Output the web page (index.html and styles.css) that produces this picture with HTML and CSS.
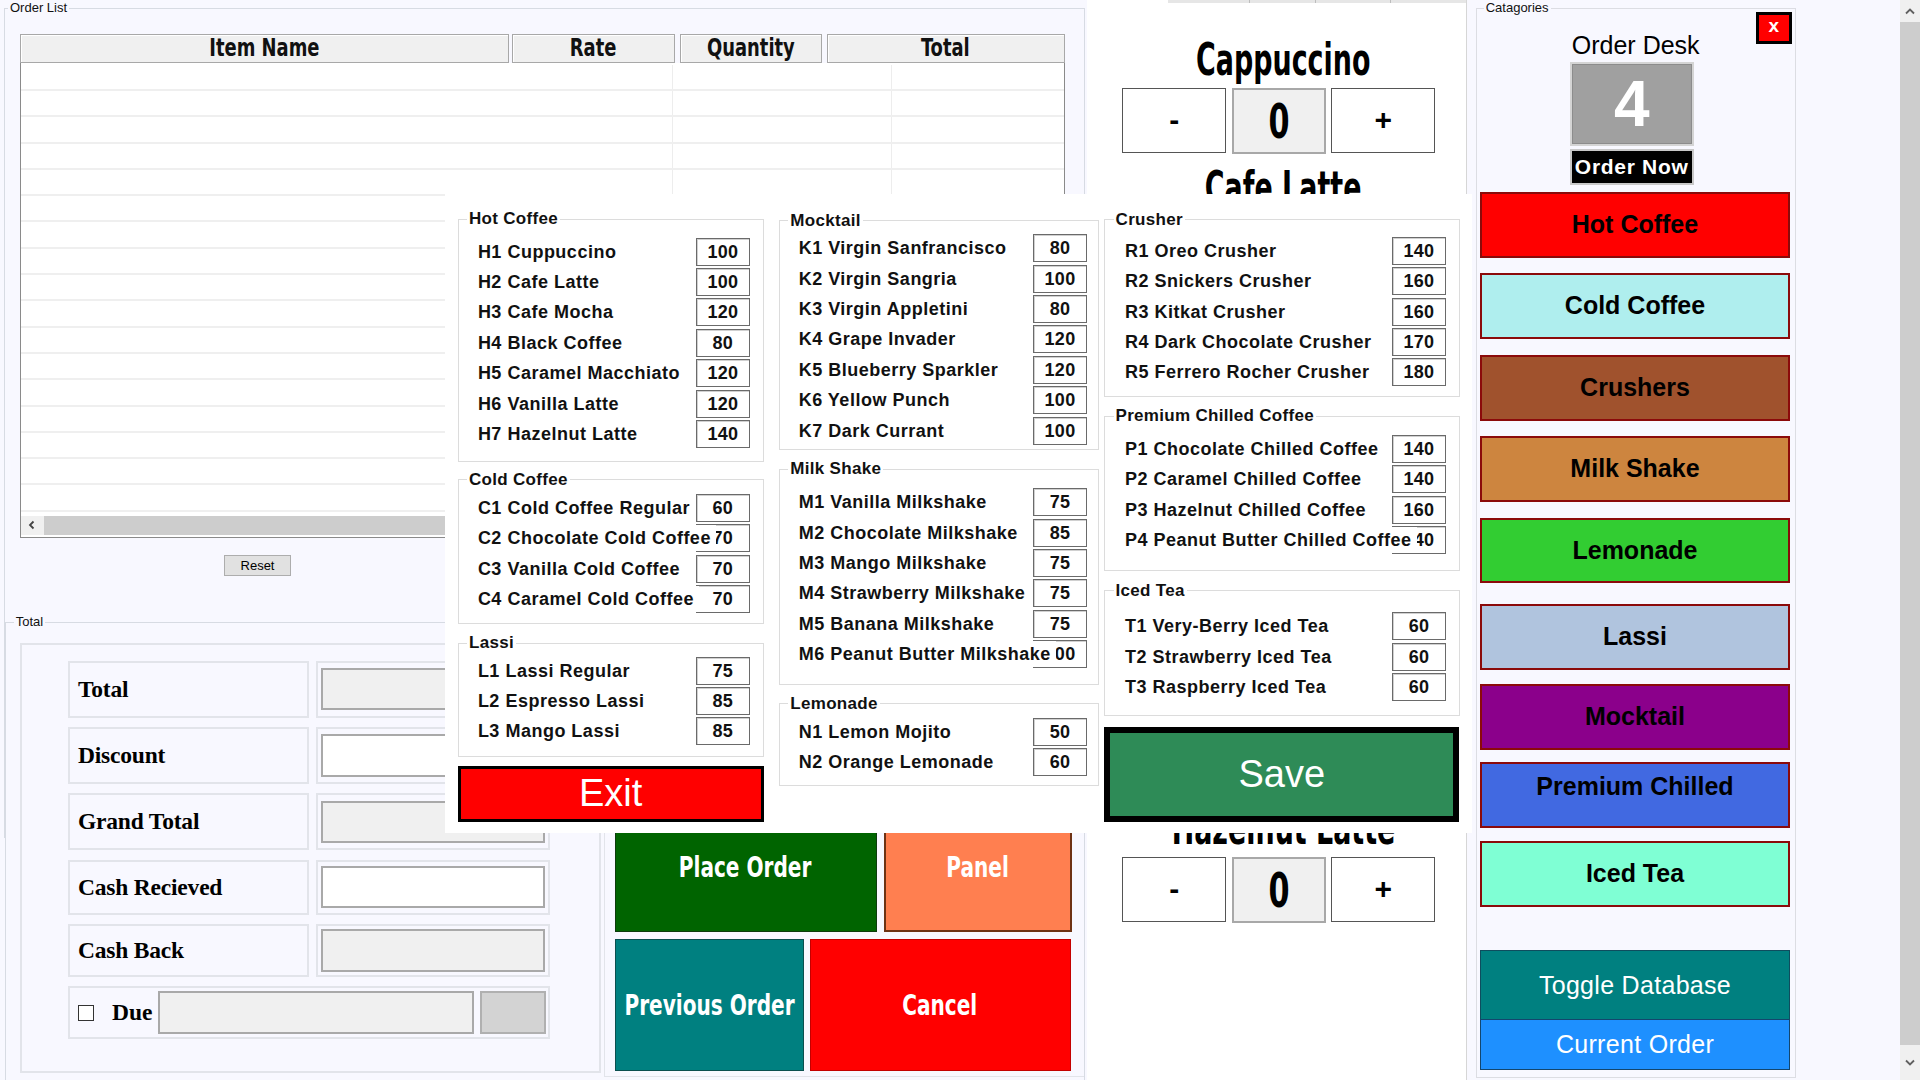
FILE: index.html
```html
<!DOCTYPE html>
<html>
<head>
<meta charset="utf-8">
<title>Order Desk</title>
<link rel="stylesheet" href="styles.css">
</head>
<body>
<div class="app">
  <div class="left">
    <fieldset class="gb orderlist">
      <legend>Order List</legend>
      <div class="grid">
        <div class="ghead">
          <div class="hc c-name"><span class="sx">Item Name</span></div>
          <div class="hc c-rate"><span class="sx">Rate</span></div>
          <div class="hc c-qty"><span class="sx">Quantity</span></div>
          <div class="hc c-total"><span class="sx">Total</span></div>
        </div>
        <div class="gbody">
          <div class="gr"><span></span><span></span><span></span></div>
          <div class="gr"><span></span><span></span><span></span></div>
          <div class="gr"><span></span><span></span><span></span></div>
          <div class="gr"><span></span><span></span><span></span></div>
          <div class="gr"><span></span><span></span><span></span></div>
          <div class="gr"><span></span><span></span><span></span></div>
          <div class="gr"><span></span><span></span><span></span></div>
          <div class="gr"><span></span><span></span><span></span></div>
          <div class="gr"><span></span><span></span><span></span></div>
          <div class="gr"><span></span><span></span><span></span></div>
          <div class="gr"><span></span><span></span><span></span></div>
          <div class="gr"><span></span><span></span><span></span></div>
          <div class="gr"><span></span><span></span><span></span></div>
          <div class="gr"><span></span><span></span><span></span></div>
          <div class="gr"><span></span><span></span><span></span></div>
          <div class="gr"><span></span><span></span><span></span></div>
          <div class="gr"><span></span><span></span><span></span></div>
        </div>
        <div class="hscroll">
          <span class="harrow"><svg width="10" height="10" viewBox="0 0 10 10"><polyline points="6.5,1.5 3,5 6.5,8.5" fill="none" stroke="#444" stroke-width="1.8"/></svg></span>
          <span class="hthumb"></span>
        </div>
      </div>
      <div class="reset">Reset</div>
    </fieldset>

    <fieldset class="gb totalbox">
      <legend>Total</legend>
      <div class="tinner">
        <div class="tpanel">
          <div class="tl">Total</div><div class="tv"><div class="tb ro"></div></div>
          <div class="tl">Discount</div><div class="tv"><div class="tb"></div></div>
          <div class="tl">Grand Total</div><div class="tv"><div class="tb ro"></div></div>
          <div class="tl">Cash Recieved</div><div class="tv"><div class="tb"></div></div>
          <div class="tl">Cash Back</div><div class="tv"><div class="tb ro"></div></div>
          <div class="duecell"><span class="chk"></span><span class="duel">Due</span><div class="tb ro duebox"></div><div class="duebtn"></div></div>
        </div>
        <div class="actions">
          <div class="arow arow1">
            <div class="abtn place"><span class="sx">Place Order</span></div>
            <div class="abtn panel"><span class="sx">Panel</span></div>
          </div>
          <div class="arow arow2">
            <div class="abtn prev"><span class="sx">Previous Order</span></div>
            <div class="abtn cancel"><span class="sx">Cancel</span></div>
          </div>
        </div>
      </div>
    </fieldset>
  </div>

  <div class="mid">
    <div class="strip"><span class="s1"></span><span class="s2"></span><span class="s3"></span><span class="s4"></span></div>
    <div class="qitem first">
      <div class="qtitle"><span class="sx">Cappuccino</span></div>
      <div class="qctl"><div class="qb minus">-</div><div class="qz"><span class="sx">0</span></div><div class="qb plus">+</div></div>
    </div>
    <div class="qclip qclip-top"><div class="qtitle"><span class="sx">Cafe Latte</span></div></div>
    <div class="qclip qclip-bottom"><div class="qtitle"><span class="sx">Hazelnut Latte</span></div></div>
    <div class="qctl qctl-last"><div class="qb minus">-</div><div class="qz"><span class="sx">0</span></div><div class="qb plus">+</div></div>
  </div>

  <fieldset class="gb cats">
    <legend>Catagories</legend>
    <div class="cathead">
      <div class="chl"></div>
      <div class="desk">Order Desk</div>
      <div class="chr"><div class="xbtn">x</div></div>
    </div>
    <div class="deskcol">
      <div class="num">4</div>
      <div class="ordernow">Order Now</div>
    </div>
    <div class="catbtn cb-hot">Hot Coffee</div>
    <div class="catbtn cb-cold">Cold Coffee</div>
    <div class="catbtn cb-crush">Crushers</div>
    <div class="catbtn cb-milk">Milk Shake</div>
    <div class="catbtn cb-lemon">Lemonade</div>
    <div class="catbtn cb-lassi">Lassi</div>
    <div class="catbtn cb-mock">Mocktail</div>
    <div class="catbtn cb-prem">Premium Chilled</div>
    <div class="catbtn cb-iced">Iced Tea</div>
    <div class="dbbtn toggle">Toggle Database</div>
    <div class="dbbtn current">Current Order</div>
  </fieldset>

  <div class="vscroll">
    <div class="varrow"><svg width="12" height="8" viewBox="0 0 12 8"><polyline points="2,6.5 6,2.5 10,6.5" fill="none" stroke="#606060" stroke-width="1.8"/></svg></div>
    <div class="vthumb"></div>
    <div class="varrow down"><svg width="12" height="8" viewBox="0 0 12 8"><polyline points="2,1.5 6,5.5 10,1.5" fill="none" stroke="#606060" stroke-width="1.8"/></svg></div>
  </div>
</div>

<div class="overlay">
  <div class="ocol ocol1">
    <fieldset class="mg g-hot">
      <legend>Hot Coffee</legend>
      <div class="rows">
        <div class="row"><div class="iname"><span>H1 Cuppuccino</span></div><div class="price">100</div></div>
        <div class="row"><div class="iname"><span>H2 Cafe Latte</span></div><div class="price">100</div></div>
        <div class="row"><div class="iname"><span>H3 Cafe Mocha</span></div><div class="price">120</div></div>
        <div class="row"><div class="iname"><span>H4 Black Coffee</span></div><div class="price">80</div></div>
        <div class="row"><div class="iname"><span>H5 Caramel Macchiato</span></div><div class="price">120</div></div>
        <div class="row"><div class="iname"><span>H6 Vanilla Latte</span></div><div class="price">120</div></div>
        <div class="row"><div class="iname"><span>H7 Hazelnut Latte</span></div><div class="price">140</div></div>
      </div>
    </fieldset>
    <fieldset class="mg g-cold">
      <legend>Cold Coffee</legend>
      <div class="rows">
        <div class="row"><div class="iname"><span>C1 Cold Coffee Regular</span></div><div class="price">60</div></div>
        <div class="row"><div class="iname"><span>C2 Chocolate Cold Coffee</span></div><div class="price">70</div></div>
        <div class="row"><div class="iname"><span>C3 Vanilla Cold Coffee</span></div><div class="price">70</div></div>
        <div class="row"><div class="iname"><span>C4 Caramel Cold Coffee</span></div><div class="price">70</div></div>
      </div>
    </fieldset>
    <fieldset class="mg g-lassi">
      <legend>Lassi</legend>
      <div class="rows">
        <div class="row"><div class="iname"><span>L1 Lassi Regular</span></div><div class="price">75</div></div>
        <div class="row"><div class="iname"><span>L2 Espresso Lassi</span></div><div class="price">85</div></div>
        <div class="row"><div class="iname"><span>L3 Mango Lassi</span></div><div class="price">85</div></div>
      </div>
    </fieldset>
    <div class="exit">Exit</div>
  </div>

  <div class="ocol ocol2">
    <fieldset class="mg g-mock">
      <legend>Mocktail</legend>
      <div class="rows">
        <div class="row"><div class="iname"><span>K1 Virgin Sanfrancisco</span></div><div class="price">80</div></div>
        <div class="row"><div class="iname"><span>K2 Virgin Sangria</span></div><div class="price">100</div></div>
        <div class="row"><div class="iname"><span>K3 Virgin Appletini</span></div><div class="price">80</div></div>
        <div class="row"><div class="iname"><span>K4 Grape Invader</span></div><div class="price">120</div></div>
        <div class="row"><div class="iname"><span>K5 Blueberry Sparkler</span></div><div class="price">120</div></div>
        <div class="row"><div class="iname"><span>K6 Yellow Punch</span></div><div class="price">100</div></div>
        <div class="row"><div class="iname"><span>K7 Dark Currant</span></div><div class="price">100</div></div>
      </div>
    </fieldset>
    <fieldset class="mg g-milk">
      <legend>Milk Shake</legend>
      <div class="rows">
        <div class="row"><div class="iname"><span>M1 Vanilla Milkshake</span></div><div class="price">75</div></div>
        <div class="row"><div class="iname"><span>M2 Chocolate Milkshake</span></div><div class="price">85</div></div>
        <div class="row"><div class="iname"><span>M3 Mango Milkshake</span></div><div class="price">75</div></div>
        <div class="row"><div class="iname"><span>M4 Strawberry Milkshake</span></div><div class="price">75</div></div>
        <div class="row"><div class="iname"><span>M5 Banana Milkshake</span></div><div class="price">75</div></div>
        <div class="row"><div class="iname"><span>M6 Peanut Butter Milkshake</span></div><div class="price">100</div></div>
      </div>
    </fieldset>
    <fieldset class="mg g-lemon">
      <legend>Lemonade</legend>
      <div class="rows">
        <div class="row"><div class="iname"><span>N1 Lemon Mojito</span></div><div class="price">50</div></div>
        <div class="row"><div class="iname"><span>N2 Orange Lemonade</span></div><div class="price">60</div></div>
      </div>
    </fieldset>
  </div>

  <div class="ocol ocol3">
    <fieldset class="mg g-crush">
      <legend>Crusher</legend>
      <div class="rows">
        <div class="row"><div class="iname"><span>R1 Oreo Crusher</span></div><div class="price">140</div></div>
        <div class="row"><div class="iname"><span>R2 Snickers Crusher</span></div><div class="price">160</div></div>
        <div class="row"><div class="iname"><span>R3 Kitkat Crusher</span></div><div class="price">160</div></div>
        <div class="row"><div class="iname"><span>R4 Dark Chocolate Crusher</span></div><div class="price">170</div></div>
        <div class="row"><div class="iname"><span>R5 Ferrero Rocher Crusher</span></div><div class="price">180</div></div>
      </div>
    </fieldset>
    <fieldset class="mg g-prem">
      <legend>Premium Chilled Coffee</legend>
      <div class="rows">
        <div class="row"><div class="iname"><span>P1 Chocolate Chilled Coffee</span></div><div class="price">140</div></div>
        <div class="row"><div class="iname"><span>P2 Caramel Chilled Coffee</span></div><div class="price">140</div></div>
        <div class="row"><div class="iname"><span>P3 Hazelnut Chilled Coffee</span></div><div class="price">160</div></div>
        <div class="row"><div class="iname"><span>P4 Peanut Butter Chilled Coffee</span></div><div class="price">140</div></div>
      </div>
    </fieldset>
    <fieldset class="mg g-iced">
      <legend>Iced Tea</legend>
      <div class="rows">
        <div class="row"><div class="iname"><span>T1 Very-Berry Iced Tea</span></div><div class="price">60</div></div>
        <div class="row"><div class="iname"><span>T2 Strawberry Iced Tea</span></div><div class="price">60</div></div>
        <div class="row"><div class="iname"><span>T3 Raspberry Iced Tea</span></div><div class="price">60</div></div>
      </div>
    </fieldset>
    <div class="save">Save</div>
  </div>
</div>
</body>
</html>
```

FILE: styles.css
```css
* { box-sizing: border-box; }
html, body { margin: 0; padding: 0; }
body {
  width: 1920px; height: 1080px; overflow: hidden;
  background: #f8f8ff;
  font-family: "Liberation Sans", Arial, sans-serif;
  color: #000;
  position: relative;
}
.app { display: flex; height: 1080px; align-items: flex-start; }

/* horizontally condensed display text */
.sx { display: inline-block; white-space: nowrap; transform-origin: 50% 50%; }

/* generic groupbox */
.gb { margin: 0; padding: 0; border: 1px solid #d7dbe3; min-width: 0; }
.gb > legend { font: 13px/16px "Liberation Sans", Arial, sans-serif; padding: 0 2px; margin-left: 3.5px; color: #111; }

/* ---------- left column ---------- */
.left { width: 1087px; flex: none; display: flex; flex-direction: column; padding-left: 3.5px; }
.orderlist { width: 1081px; height: 838px; }
.grid {
  margin: 18.3px 0 0 15px; width: 1045.5px; height: 503.7px;
  border: 1px solid #8a8a8a; background: #fff;
  display: flex; flex-direction: column;
}
.ghead { display: flex; height: 29px; flex: none; background: #f8f8ff; margin: -1px -1px 0 -1px; }
.hc {
  height: 29px; background: #f0f0f0; border: 1px solid #a8a8a8;
  box-shadow: inset 1px 1px 0 #fff;
  text-align: center; color: #111;
  font-family: "DejaVu Sans", sans-serif; font-stretch: condensed; font-weight: bold;
  font-size: 24px; line-height: 27px;
}
.hc .sx { transform: scaleX(0.83); }
.c-name { width: 490px; }
.c-rate { width: 163.7px; margin-left: 2.4px; }
.c-qty { width: 142px; margin-left: 4.3px; }
.c-total { width: 238.5px; margin-left: 5px; }
.gbody { flex: 1; overflow: hidden; padding-top: 1.4px; }
.gr { height: 26.3px; display: grid; grid-template-columns: 652.5px 219px 1fr; border-bottom: 2px solid #efefef; }
.gr span { border-right: 1px solid #ededed; }
.gr span:last-child { border-right: none; }
.hscroll { height: 19px; flex: none; display: flex; margin-bottom: 2px; }
.harrow { width: 23.5px; background: #f0f0f0; display: flex; align-items: center; justify-content: center; }
.hthumb { flex: 1; background: #cdcdcd; }
.reset {
  margin: 17px 0 0 219.5px; width: 67px; height: 21px;
  background: #e1e1e1; border: 1px solid #adadad;
  font: 13px/19px "Liberation Sans", Arial, sans-serif; text-align: center;
}

/* Total group lies over the lower part of the Order List group */
.totalbox { width: 1080.3px; margin: -224px 0 0 1.2px; height: 520px; background: #f8f8ff; }
.totalbox > legend { margin-left: 8.1px; }
.tinner { display: flex; margin-top: 13px; }
.tpanel {
  margin-left: 14.8px; width: 581px; height: 430px;
  border: 2px solid #e2e4ea;
  display: grid;
  grid-template-columns: 241px 234px;
  grid-template-rows: 57px 57px 57px 55px 53px 53px;
  column-gap: 7px; row-gap: 9.3px;
  padding: 15.7px 0 0 45.5px;
}
.tl {
  border: 2px solid #e2e4ea; padding-left: 8px;
  display: flex; align-items: center;
  font: bold 23.5px "Liberation Serif", "Times New Roman", serif; letter-spacing: -0.2px;
}
.tv { border: 2px solid #e2e4ea; display: flex; align-items: center; padding: 0 3px; }
.tb { width: 100%; height: 42.5px; border: 2px solid #a9a9a9; background: #fff; }
.tb.ro { background: #f0f0f0; }
.duecell {
  grid-column: 1 / 3; border: 2px solid #e2e4ea;
  display: flex; align-items: center; padding-left: 8px;
}
.chk { width: 16px; height: 16px; border: 1px solid #333; background: #fff; flex: none; }
.duel { font: bold 23.5px "Liberation Serif", serif; margin-left: 18px; width: 45.7px; }
.duebox { width: 316px; flex: none; }
.duebtn { width: 66.6px; height: 42.5px; margin-left: 6px; background: #d3d3d3; border: 2px solid #b0b0b0; }

.actions {
  margin-left: 2.1px; width: 480px; height: 434px;
  border: 1px solid #e2e4ea; border-right: none;
  padding: 157px 0 0 10px;
}
.arow { display: flex; }
.arow1 { height: 131px; }
.arow2 { height: 132px; margin-top: 7px; }
.abtn {
  color: #fff; display: flex; align-items: center; justify-content: center;
  font-family: "DejaVu Sans", sans-serif; font-stretch: condensed; font-weight: bold; font-size: 29px;
  white-space: nowrap;
}
.abtn .sx { transform: scaleX(0.77); }
.place { width: 262px; background: #006400; border: 1.5px solid #0d3b0d; }
.panel { width: 188px; margin-left: 7px; background: #ff7f50; border: 2px solid #6e3214; }
.prev { width: 189px; background: #008080; border: 1.5px solid #0b4f4f; }
.cancel { width: 261px; margin-left: 6px; background: #ff0000; border: 1.5px solid #c40000; }

/* ---------- middle (quantity) ---------- */
.mid { width: 380px; height: 1080px; flex: none; background: #fff; border-right: 1px solid #d6d6d6; display: flex; flex-direction: column; }
.strip { height: 3px; margin-left: 81px; display: flex; flex: none; }
.strip span { height: 3px; background: #e6e6e6; border-right: 1px solid #bdbdbd; }
.s1 { width: 82px; } .s2 { width: 66px; } .s3 { width: 75px; } .s4 { flex: 1; border-right: none !important; }
.qitem.first { margin-top: 32.8px; }
.qtitle {
  height: 48px; text-align: center; padding-left: 13px;
  font-family: "DejaVu Sans", sans-serif; font-stretch: condensed; font-weight: bold;
  font-size: 44px; line-height: 48px; white-space: nowrap; flex: none;
}
.qtitle .sx { transform: scaleX(0.68); }
.qctl { display: flex; margin: 3.9px 0 0 35.3px; height: 65px; flex: none; }
.qb {
  width: 104px; height: 65px; border: 1px solid #555; background: #fff;
  display: flex; align-items: center; justify-content: center;
  font: bold 30px "Liberation Sans", Arial, sans-serif;
}
.qz {
  width: 94.3px; height: 66px; margin: 0 5px 0 5.7px;
  background: #f0f0f0; border: 2px solid #a8a8a8;
  display: flex; align-items: center; justify-content: center;
  font-family: "DejaVu Sans", sans-serif; font-stretch: condensed; font-weight: bold; font-size: 48px;
}
.qz .sx { transform: scaleX(0.7); }
.qclip { overflow: hidden; flex: none; }
.qclip-top { height: 30px; margin-top: 11.3px; }
.qclip-bottom { height: 22px; margin-top: 639px; }
.qclip-bottom .qtitle { margin-top: -28px; }
.qctl-last { margin-top: 1.7px; }

/* ---------- categories ---------- */
.cats { width: 320px; height: 1078.4px; margin-left: 8.7px; border-color: #dcdde3; }
.cats > legend { margin-left: 7px; }
.cathead { display: grid; grid-template-columns: 1fr auto 1fr; align-items: start; height: 44px; }
.desk { margin-top: 14px; font: 25px/30px "Liberation Sans", Arial, sans-serif; white-space: nowrap; }
.chr { display: flex; justify-content: flex-end; }
.xbtn {
  margin: -3.6px 3px 0 0; width: 36px; height: 31.6px;
  border: 3.5px solid #000; background: #ff0000; color: #fff;
  font: bold 19px/22px "Liberation Sans", Arial, sans-serif; text-align: center;
}
.deskcol { display: flex; flex-direction: column; align-items: center; padding-right: 8px; }
.num {
  margin-top: 2.4px; width: 124px; height: 84px; background: #a0a0a0;
  border: 2px solid #d4d4d4; box-shadow: inset 0 0 0 1px #8c8c8c;
  color: #fff; font: bold 64px/80px "Liberation Sans", Arial, sans-serif; text-align: center;
}
.ordernow {
  margin-top: 2.6px; width: 124px; height: 36.4px; background: #000;
  border: 2px solid #c8c8c8; color: #fff;
  font: bold 21px/32px "Liberation Sans", Arial, sans-serif; letter-spacing: 0.7px; text-align: center;
}
.catbtn {
  width: 310px; height: 65.8px; margin: 15.7px 0 0 3.3px;
  border: 2.5px solid #8b0a0a;
  font: bold 25px/61px "Liberation Sans", Arial, sans-serif; text-align: center; color: #000;
}
.cb-hot { background: #ff0000; margin-top: 6.6px; }
.cb-cold { background: #afeeee; }
.cb-crush { background: #a0522d; }
.cb-milk { background: #cd853f; }
.cb-lemon { background: #32cd32; margin-top: 15.4px; }
.cb-lassi { background: #b0c4de; margin-top: 20.7px; }
.cb-mock { background: #8b008b; margin-top: 14px; }
.cb-prem { background: #4169e1; margin-top: 12.4px; line-height: 30px; padding-top: 7px; }
.cb-iced { background: #7fffd4; margin-top: 13.4px; }
.dbbtn {
  width: 310px; margin-left: 3.3px; color: #fff; text-align: center;
  font: 25px "Liberation Sans", Arial, sans-serif; letter-spacing: 0.3px;
  display: flex; align-items: center; justify-content: center;
}
.toggle { margin-top: 43.3px; height: 68.7px; background: #008080; border: 1.5px solid #0f4d5e; border-bottom: none; }
.current { height: 51.3px; background: #1e90ff; border: 1.5px solid #13466e; }

/* ---------- vertical scrollbar ---------- */
.vscroll { margin-left: auto; width: 20px; height: 1080px; flex: none; background: #f0f0f0; display: flex; flex-direction: column; }
.varrow { height: 21.7px; display: flex; align-items: center; justify-content: center; }
.varrow.down { height: 35px; }
.vthumb { flex: 1; background: #cdcdcd; }

/* ---------- overlay menu editor ---------- */
.overlay {
  position: absolute; left: 445px; top: 194px; width: 1027px; height: 639px;
  background: #fff; z-index: 5;
  display: flex; align-items: flex-start; padding-left: 12.7px;
}
.ocol { display: flex; flex-direction: column; }
.ocol1 { width: 306px; margin-top: 15.3px; }
.ocol2 { width: 320.4px; margin-left: 15.3px; margin-top: 16.7px; }
.ocol3 { width: 355.4px; margin-left: 4.9px; margin-top: 15.9px; }
.mg { margin: 0; padding: 0; border: 1px solid #dcdcdc; min-width: 0; }
.mg > legend {
  font: bold 17px/20px "Liberation Sans", Arial, sans-serif; letter-spacing: 0.3px;
  padding: 0 2px; margin-left: 8.3px; color: #111;
}
.rows { padding-left: 19.2px; padding-right: 12.5px; }
.ocol2 .rows { padding-left: 18.7px; padding-right: 11.4px; }
.ocol3 .rows { padding-left: 19.7px; padding-right: 12.7px; }
.row { height: 30.4px; display: flex; align-items: center; }
.iname {
  flex: 1 1 auto; min-width: 0; white-space: nowrap;
  font: bold 18px/26px "Liberation Sans", Arial, sans-serif; letter-spacing: 0.5px; color: #111;
}
.iname span { display: inline-block; background: #fff; position: relative; z-index: 1; padding-right: 5px; }
.price {
  flex: none; width: 54.7px; height: 28px; background: #fff;
  border: 1px solid #6a6a6a; box-shadow: inset 1px 1px 0 #d0d0d0;
  text-align: center; font: bold 18px/26px "Liberation Sans", Arial, sans-serif; letter-spacing: 0.3px; color: #111;
}
.ocol2 .price, .ocol3 .price { width: 54px; }

.g-hot .rows { padding-top: 7.2px; padding-bottom: 11.9px; }
.g-cold { margin-top: 7.8px; }
.g-cold .rows { padding-top: 2.8px; padding-bottom: 8.4px; }
.g-lassi { margin-top: 9.5px; }
.g-lassi .rows { padding-top: 2.2px; padding-bottom: 9.5px; }
.g-mock .rows { padding-top: 2.4px; padding-bottom: 3.6px; }
.g-milk { margin-top: 8.8px; }
.g-milk .rows { padding-top: 7.8px; padding-bottom: 14.3px; }
.g-lemon { margin-top: 9.2px; }
.g-lemon .rows { padding-top: 2.8px; padding-bottom: 7.9px; }
.g-crush .rows { padding-top: 5.8px; padding-bottom: 8px; }
.g-prem { margin-top: 9.4px; }
.g-prem .rows { padding-top: 7.5px; padding-bottom: 14.8px; }
.g-iced { margin-top: 9.8px; }
.g-iced .rows { padding-top: 10.4px; padding-bottom: 13.2px; }

.exit {
  margin-top: 8.5px; width: 306px; height: 56.6px;
  border: 3.5px solid #000; background: #ff0000; color: #fff;
  font: 38px/49px "Liberation Sans", Arial, sans-serif; text-align: center;
}
.save {
  margin-top: 10.7px; width: 355px; height: 94.7px;
  border: 6px solid #000; background: #2e8b57; color: #fff;
  font: 38px/82px "Liberation Sans", Arial, sans-serif; text-align: center;
}
```
